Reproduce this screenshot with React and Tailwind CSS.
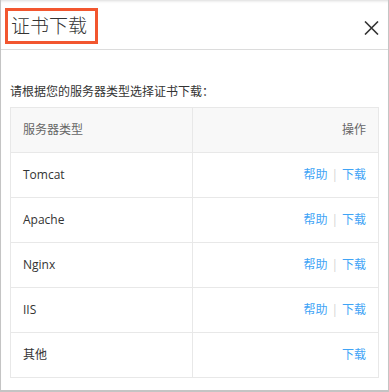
import React from 'react'

const rows = [
  { name: 'Tomcat', help: true },
  { name: 'Apache', help: true },
  { name: 'Nginx', help: true },
  { name: 'IIS', help: true },
  { name: '其他', help: false },
];

const font = { fontFamily: '"Open Sans", "Noto Sans CJK SC", sans-serif' };

const App = () => {
  return (
    <div
      className="w-[389px] h-[392px] bg-white border-l border-r border-b-2 border-[#c4c4c4] shadow-[inset_0_3px_3px_-2px_rgba(0,0,0,0.15)] text-[#333]"
      style={font}
    >
      <div className="h-[50px] border-b border-[#dcdcdc] flex items-start justify-between">
        <div className="ml-[4px] mt-[8px] w-[93px] h-[36px] border-[3px] border-[#f2562f] flex items-center pl-[3px] text-[19px] leading-none font-light text-[#333]">
          证书下载
        </div>
        <button className="mt-[21px] mr-[9px] w-[15px] h-[14px] flex items-center justify-center">
          <svg width="15" height="14" viewBox="0 0 15 14">
            <path d="M1 0.5 L14 13.5 M14 0.5 L1 13.5" stroke="#333" strokeWidth="1.6" fill="none" />
          </svg>
        </button>
      </div>

      <div className="px-[9px]">
        <p className="mt-[32px] mb-[5px] text-[12px] leading-[20px] text-[#333]">
          请根据您的服务器类型选择证书下载：
        </p>

        <div className="grid grid-cols-[182px_1fr] border-t border-l border-[#e8e8e8] text-[12px]">
          <div className="h-[45px] border-r border-b border-[#e8e8e8] bg-[#f8f8f8] flex items-center pl-[12px] text-[#666]">
            服务器类型
          </div>
          <div className="h-[45px] border-r border-b border-[#e8e8e8] bg-[#f8f8f8] flex items-center justify-end pr-[12px] text-[#666]">
            操作
          </div>
          {rows.map((row) => (
            <React.Fragment key={row.name}>
              <div className="h-[45px] border-r border-b border-[#e8e8e8] flex items-center pl-[12px] text-[#333]">
                {row.name}
              </div>
              <div className="h-[45px] border-r border-b border-[#e8e8e8] flex items-center justify-end pr-[12px] text-[#3fa4f6]">
                {row.help && (
                  <>
                    <a href="#" className="text-[#3fa4f6]">帮助</a>
                    <span className="mx-[4px] text-[#d4d4d4]">|</span>
                  </>
                )}
                <a href="#" className="text-[#3fa4f6]">下载</a>
              </div>
            </React.Fragment>
          ))}
        </div>
      </div>
    </div>
  );
};

export default App
